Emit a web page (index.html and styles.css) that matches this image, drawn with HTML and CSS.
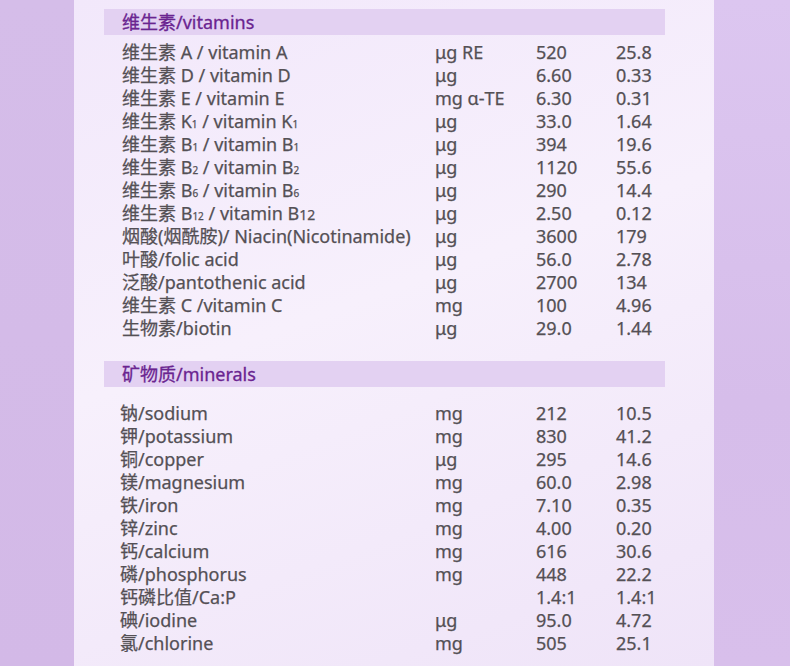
FILE: index.html
```html
<!DOCTYPE html>
<html lang="zh">
<head>
<meta charset="utf-8">
<link rel="stylesheet" href="styles.css">
</head>
<body>
<div class="page">
  <div class="side side-left"></div>
  <main class="panel">
    <section class="group">
      <h2 class="bar">维生素/vitamins</h2>
      <div class="table">
        <div class="row"><span>维生素 A / vitamin A</span><span>μg RE</span><span>520</span><span>25.8</span></div>
        <div class="row"><span>维生素 D / vitamin D</span><span>μg</span><span>6.60</span><span>0.33</span></div>
        <div class="row"><span>维生素 E / vitamin E</span><span>mg α-TE</span><span>6.30</span><span>0.31</span></div>
        <div class="row"><span>维生素 K<sub>1</sub> / vitamin K<sub>1</sub></span><span>μg</span><span>33.0</span><span>1.64</span></div>
        <div class="row"><span>维生素 B<sub>1</sub> / vitamin B<sub>1</sub></span><span>μg</span><span>394</span><span>19.6</span></div>
        <div class="row"><span>维生素 B<sub>2</sub> / vitamin B<sub>2</sub></span><span>μg</span><span>1120</span><span>55.6</span></div>
        <div class="row"><span>维生素 B<sub>6</sub> / vitamin B<sub>6</sub></span><span>μg</span><span>290</span><span>14.4</span></div>
        <div class="row"><span>维生素 B<sub>12</sub> / vitamin B<span class="small">12</span></span><span>μg</span><span>2.50</span><span>0.12</span></div>
        <div class="row"><span>烟酸(烟酰胺)/ Niacin(Nicotinamide)</span><span>μg</span><span>3600</span><span>179</span></div>
        <div class="row"><span>叶酸/folic acid</span><span>μg</span><span>56.0</span><span>2.78</span></div>
        <div class="row"><span>泛酸/pantothenic acid</span><span>μg</span><span>2700</span><span>134</span></div>
        <div class="row"><span>维生素 C /vitamin C</span><span>mg</span><span>100</span><span>4.96</span></div>
        <div class="row"><span>生物素/biotin</span><span>μg</span><span>29.0</span><span>1.44</span></div>
      </div>
    </section>
    <section class="group minerals">
      <h2 class="bar">矿物质/minerals</h2>
      <div class="table">
        <div class="row"><span>钠/sodium</span><span>mg</span><span>212</span><span>10.5</span></div>
        <div class="row"><span>钾/potassium</span><span>mg</span><span>830</span><span>41.2</span></div>
        <div class="row"><span>铜/copper</span><span>μg</span><span>295</span><span>14.6</span></div>
        <div class="row"><span>镁/magnesium</span><span>mg</span><span>60.0</span><span>2.98</span></div>
        <div class="row"><span>铁/iron</span><span>mg</span><span>7.10</span><span>0.35</span></div>
        <div class="row"><span>锌/zinc</span><span>mg</span><span>4.00</span><span>0.20</span></div>
        <div class="row"><span>钙/calcium</span><span>mg</span><span>616</span><span>30.6</span></div>
        <div class="row"><span>磷/phosphorus</span><span>mg</span><span>448</span><span>22.2</span></div>
        <div class="row"><span>钙磷比值/Ca:P</span><span></span><span>1.4:1</span><span>1.4:1</span></div>
        <div class="row"><span>碘/iodine</span><span>μg</span><span>95.0</span><span>4.72</span></div>
        <div class="row"><span>氯/chlorine</span><span>mg</span><span>505</span><span>25.1</span></div>
      </div>
    </section>
  </main>
  <div class="side side-right"></div>
</div>
</body>
</html>
```

FILE: styles.css
```css
html, body {
  margin: 0;
  padding: 0;
}
body {
  width: 790px;
  height: 666px;
  overflow: hidden;
  font-family: "Noto Sans", "Noto Sans CJK SC", sans-serif;
}
.page {
  display: flex;
  height: 666px;
}
.side {
  height: 100%;
}
.side-left {
  width: 74px;
  background: linear-gradient(180deg, #d5bde9 0%, #d3b9e7 100%);
}
.side-right {
  flex: 1;
  background: linear-gradient(180deg, #dcc6f0 0%, #d6bdea 60%, #d8bfeb 100%);
}
.panel {
  width: 640px;
  background: linear-gradient(160deg, #f2e8fb 0%, #f7f0fc 45%, #efe4f8 100%);
  padding-top: 9px;
  box-sizing: border-box;
}
.group {
  display: flex;
  flex-direction: column;
}
.minerals {
  margin-top: 21px;
}
.bar {
  margin: 0 0 0 30px;
  width: 561px;
  height: 26px;
  box-sizing: border-box;
  padding-left: 18px;
  background: #e3d1f2;
  color: #6a2490;
  font-weight: 400;
  font-size: 18px;
  line-height: 26px;
  -webkit-text-stroke: 0.3px #6a2490;
}
.table {
  margin-top: 6px;
  padding-left: 48px;
  display: flex;
  flex-direction: column;
}
.minerals .table {
  margin-top: 15px;
  padding-left: 46px;
}
.row {
  display: grid;
  grid-template-columns: 313px 101px 80px 80px;
  height: 23px;
  line-height: 23px;
  font-size: 18px;
  color: #545055;
  -webkit-text-stroke: 0.25px #545055;
  white-space: nowrap;
}
.minerals .row {
  grid-template-columns: 315px 101px 80px 80px;
}
sub {
  font-size: 10px;
  vertical-align: baseline;
  position: relative;
  top: 0;
}
.small {
  font-size: 14px;
}
```
